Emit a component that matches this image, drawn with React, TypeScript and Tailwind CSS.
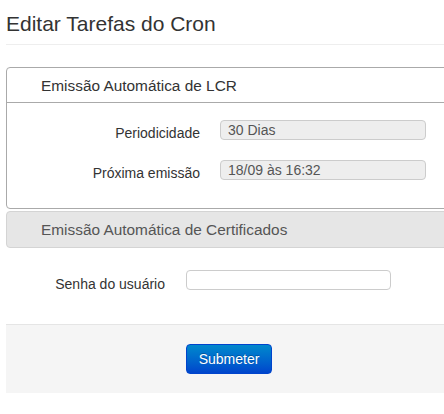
import React from "react";

type FieldRowProps = {
    label: string;
    value: string;
};

function ReadonlyRow({ label, value }: FieldRowProps) {
    return (
        <div className="flex items-start gap-[20px]">
            <label className="w-[193px] h-[20px] pt-[3px] text-right text-[14px] leading-[20px] text-[#333]">{label}</label>
            <div className="w-[206px] h-[20px] rounded-[4px] border border-[#ccc] bg-[#eee] px-[7px] text-[14px] leading-[18px] text-[#555]">
                {value}
            </div>
        </div>
    );
}

export default function App() {
    return (
        <div className="w-full min-h-[414px] overflow-hidden bg-white font-['Liberation_Sans',Arial,sans-serif]">
            <div className="ml-[6px] w-[460px]">
                <div className="pt-[10px] pb-[7px] border-b border-[#eee]">
                    <h3 className="text-[21px] leading-[27px] text-[#333]">Editar Tarefas do Cron</h3>
                </div>

                <div className="mt-[22px] rounded-tl-[4px] rounded-bl-[4px] border border-[#aaa]">
                    <div className="h-[35px] border-b border-[#aaa] pl-[34px] text-[15.4px] leading-[36px] text-[#333]">
                        Emissão Automática de LCR
                    </div>
                    <div className="flex flex-col gap-[20px] pt-[17px] pb-[28px]">
                        <ReadonlyRow label="Periodicidade" value="30 Dias" />
                        <ReadonlyRow label="Próxima emissão" value="18/09 às 16:32" />
                    </div>
                </div>

                <div className="mt-[2px] h-[37px] rounded-l-[4px] border border-[#d4d4d4] bg-[#e6e6e6] pl-[34px] text-[15.4px] leading-[36px] text-[#555]">
                    Emissão Automática de Certificados
                </div>

                <div className="flex items-start gap-[21px] pt-[22px]">
                    <label className="w-[159px] h-[20px] pt-[4px] text-right text-[14px] leading-[20px] text-[#333]">Senha do usuário</label>
                    <input
                        type="password"
                        className="w-[205px] h-[20px] rounded-[4px] border border-[#ccc] bg-white outline-none"
                    />
                </div>

                <div className="mt-[34px] flex border-t border-[#e5e5e5] bg-[#f5f5f5] pt-[19px] pb-[19px] pl-[180px]">
                    <button className="h-[30px] w-[86px] rounded-[4px] border border-[#0044cc] bg-gradient-to-b from-[#0088cc] to-[#0044cc] text-[14px] text-white [text-shadow:0_-1px_0_rgba(0,0,0,0.25)]">
                        Submeter
                    </button>
                </div>
            </div>
        </div>
    );
}
